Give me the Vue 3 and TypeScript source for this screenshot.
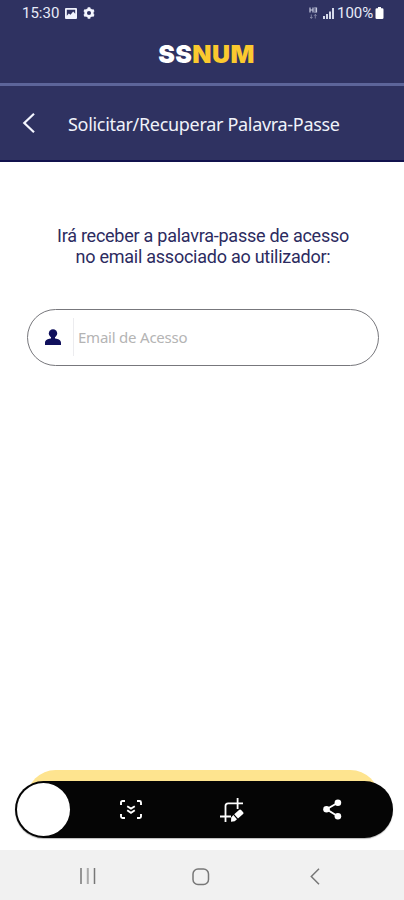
<script setup lang="ts">
import { ref } from 'vue'

const email = ref('')
const messageLines: string[] = [
  'Irá receber a palavra-passe de acesso',
  'no email associado ao utilizador:',
]
</script>

<template>
  <div class="screen">
    <div class="status">
      <div class="status-left">
        <span class="clock">15:30</span>
        <svg class="picture" width="12" height="11" viewBox="0 0 12 11">
          <path fill="#eff2fc" fill-rule="evenodd" d="M1 0h10a1 1 0 0 1 1 1v9a1 1 0 0 1-1 1H1a1 1 0 0 1-1-1V1a1 1 0 0 1 1-1Zm.8 1.8v6l2-2.4 1.7 1.3 2.7-3.2 2 2.3v-4Z" />
        </svg>
        <svg class="gear" width="12" height="12" viewBox="0 0 12 12">
          <circle cx="6" cy="6" r="3.4" fill="none" stroke="#f4f6ff" stroke-width="2.7" />
          <path stroke="#f4f6ff" stroke-width="2.6" d="M6 .3v2M6 9.7v2M1.1 3.1l1.7 1M9.2 7.9l1.7 1M1.1 8.9l1.7-1M9.2 4.1l1.7-1" />
        </svg>
      </div>
      <div class="status-right">
        <svg width="9" height="12" viewBox="0 0 9 12" fill="none" stroke="#c7cbe0">
          <path stroke-width="1.2" d="M1 .5v5M1 3h3M4 .5v5M5.2 1h2.3v4H5.2M5.3 3h2" />
          <path stroke-width="1" d="M2.3 7.5v4M1 10l1.3 1.3L3.6 10M6.3 11.5v-4M5 8.8l1.3-1.3 1.3 1.3" opacity=".5" />
        </svg>
        <svg class="signal" width="12" height="11" viewBox="0 0 12 11" fill="#d5d9e9">
          <path d="M0 8h2v3H0zM3 6h2v5H3zM6 3.5h2V11H6zM9 0h2v11H9z" />
        </svg>
        <span class="percent">100%</span>
        <svg class="battery" width="9" height="12" viewBox="0 0 9 12" fill="#fff">
          <path d="M3 0h3v1.3h1.2A1.3 1.3 0 0 1 8.5 2.6v8.1A1.3 1.3 0 0 1 7.2 12H1.8A1.3 1.3 0 0 1 .5 10.7V2.6a1.3 1.3 0 0 1 1.3-1.3H3Z" />
        </svg>
      </div>
    </div>

    <header class="brand"><span class="logo">SS<b>NUM</b></span></header>

    <div class="heading">
      <svg class="back" width="14" height="22" viewBox="0 0 14 22" fill="none" stroke="#f4f6ff" stroke-width="2.2">
        <path d="M12 1.8 2.3 11l9.7 9.2" />
      </svg>
      <h1>Solicitar/Recuperar Palavra-Passe</h1>
    </div>

    <main>
      <p class="message"><span v-for="line in messageLines" :key="line">{{ line }}</span></p>
      <label class="field">
        <svg class="person" width="16" height="16" viewBox="0 0 16 16" fill="#10105c">
          <circle cx="8" cy="4.4" r="4.2" />
          <path d="M6 7h4v3H6zM0 16v-2.2C0 11 3 10 5.5 9.6h5C13 10 16 11 16 13.8V16Z" />
        </svg>
        <span class="separator"></span>
        <input v-model="email" type="email" placeholder="Email de Acesso" />
      </label>
    </main>

    <footer>
      <div class="submit"></div>
      <div class="toolbar">
        <div class="thumb"></div>
        <svg class="scroll" width="22" height="19" viewBox="0 0 22 19" fill="none" stroke="#fff" stroke-width="1.9">
          <path d="M1 5V2.5Q1 1 2.5 1H5M17 1h2.5Q21 1 21 2.5V5M1 14v2.5Q1 18 2.5 18H5M17 18h2.5q1.5 0 1.5-1.5V14" />
          <path stroke-width="1.9" d="m7.2 6.2 3.8 2.4 3.8-2.4M7.2 10.3l3.8 2.5 3.8-2.5" />
        </svg>
        <svg class="crop" width="24" height="26" viewBox="0 0 24 26" fill="none" stroke="#fff" stroke-width="1.8">
          <path d="M5.5 25V9q0-2.7 2.7-2.7H23M0 19.5h11M17.6 1v11" />
          <path fill="#fff" stroke="none" d="m14.2 17.2 5.1-4.4q1-.8 1.8.1l2.1 2.4q.8 1-.1 1.8L18 21.6ZM13.3 18.1l3.7 4.2-2.3 1.9-3.7.6.2-4.4Z" />
        </svg>
        <svg class="share" width="19" height="21" viewBox="0 0 19 21" fill="#fff">
          <path fill="none" stroke="#fff" stroke-width="1.9" d="M14.8 3.7 3.5 10.3l11.3 7" />
          <circle cx="14.9" cy="3.7" r="3.3" /><circle cx="3.5" cy="10.3" r="3.3" /><circle cx="14.9" cy="17.3" r="3.3" />
        </svg>
      </div>
    </footer>

    <nav>
      <svg width="16" height="17" viewBox="0 0 16 17" fill="none" stroke="#777" stroke-width="1.5">
        <path d="M1 0v16M14.5 0v16" /><path stroke="#aaa" stroke-width="2" d="M7.8 0v16" />
      </svg>
      <svg class="home" width="18" height="18" viewBox="0 0 18 18" fill="none" stroke="#777" stroke-width="1.5">
        <rect x="1" y="1" width="15.5" height="15.5" rx="5" />
      </svg>
      <svg class="nav-back" width="10" height="17" viewBox="0 0 10 17" fill="none" stroke="#777" stroke-width="1.5">
        <path d="M9 .8 1.3 8.5 9 16.2" />
      </svg>
    </nav>
  </div>
</template>

<style>
body { background: #fff; }
</style>

<style scoped>
* { box-sizing: border-box; }
svg { display: block; flex: none; }
.screen {
  width: 404px;
  height: 900px;
  display: flex;
  flex-direction: column;
  background: #fff;
  overflow: hidden;
}
.status {
  height: 26px;
  display: flex;
  justify-content: space-between;
  padding: 0 20px 0 22px;
  background: #2f3261;
  color: #e8ebf8;
  font: 15px/26px Roboto, sans-serif;
}
.status-left, .status-right { display: flex; align-items: center; }
.clock { width: 38px; }
.picture { margin-left: 5px; }
.gear { margin-left: 6px; }
.signal { margin-left: 5px; }
.percent { width: 37px; margin-left: 2px; white-space: nowrap; }
.battery { margin-left: 1px; }
.brand {
  height: 60px;
  display: flex;
  justify-content: center;
  padding: 14px 0 0 9px;
  background: #2f3261;
  border-bottom: 3px solid #5d659a;
  color: #fff;
}
.logo { font: 900 25px/29px Inter, sans-serif; letter-spacing: 0.4px; white-space: nowrap; }
.logo b { color: #fbc92f; font-weight: 900; }
.heading {
  height: 76px;
  display: flex;
  align-items: center;
  padding-left: 22px;
  background: #2f3261;
  border-bottom: 2px solid #11124d;
}
h1 {
  margin: 2px 0 0 32px;
  color: #f0f2fa;
  font: 400 18px/26px 'Noto Sans', sans-serif;
  letter-spacing: -0.31px;
  white-space: nowrap;
}
main { flex: 1; padding: 63px 25px 0 27px; }
.message {
  margin: 0;
  color: #2c2b60;
  font: 18px/21px Roboto, sans-serif;
  letter-spacing: -0.25px;
  text-align: center;
}
.message span { display: block; white-space: nowrap; }
.field {
  height: 57px;
  margin-top: 42px;
  display: flex;
  align-items: center;
  padding: 0 0 2px 17px;
  border: 1px solid #77777c;
  border-radius: 29px;
}
.separator { width: 1px; height: 38px; margin: 0 4px 0 12px; background: #ececef; }
input {
  flex: 1;
  min-width: 0;
  padding: 0;
  border: 0;
  outline: 0;
  background: transparent;
  font: 15px/24px 'Noto Sans', sans-serif;
  letter-spacing: -0.22px;
}
input::placeholder { color: #b4b4b4; opacity: 1; }
footer { height: 80px; padding-left: 15px; }
.submit { width: 352px; height: 57px; margin-left: 12px; border-radius: 29px; background: #fee48f; }
.toolbar {
  width: 378px;
  height: 57px;
  display: flex;
  align-items: center;
  margin-top: -46px;
  padding-left: 2px;
  border-radius: 29px;
  background: #050505;
  box-shadow: 0 1px 1px #bbb;
}
.thumb { width: 53px; height: 53px; border-radius: 50%; background: #fff; }
.scroll { margin-left: 50px; }
.crop { margin-left: 78px; }
.share { margin-left: 79px; }
nav {
  height: 50px;
  display: flex;
  align-items: center;
  padding: 3px 0 0 80px;
  background: #f1f1f1;
}
.home { margin-left: 96px; }
.nav-back { margin-left: 100px; }
</style>
